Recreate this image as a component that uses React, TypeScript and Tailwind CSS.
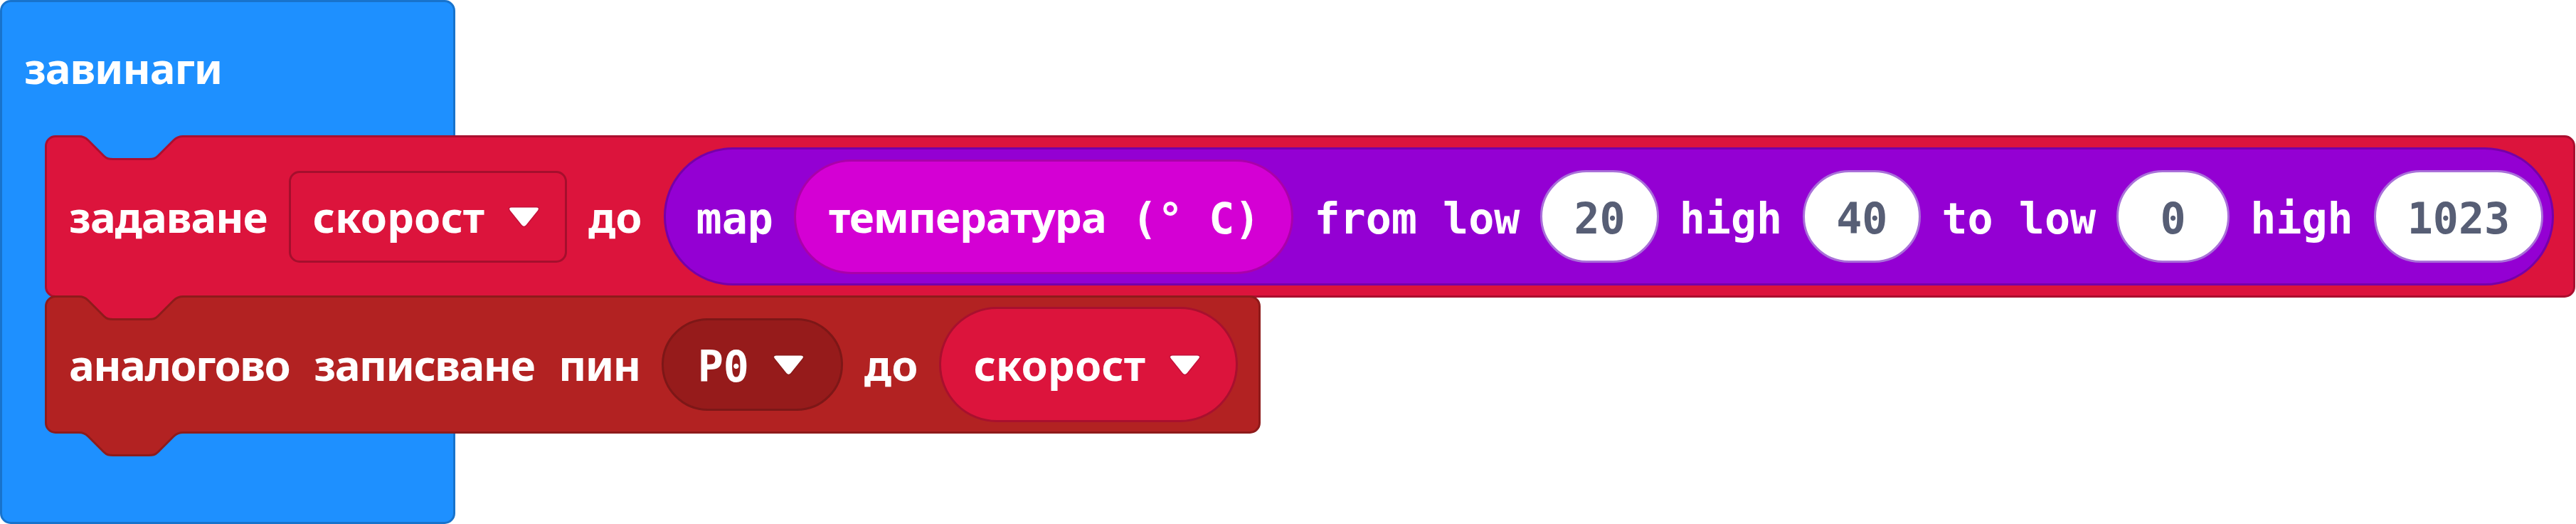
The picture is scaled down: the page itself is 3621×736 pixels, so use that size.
import React from "react";

const SANS = "font-['Noto_Sans','Open_Sans',sans-serif] font-bold";
const MONO = "font-['DejaVu_Sans_Mono',monospace] font-bold";

// notch path shared by top cut-outs and bottom tabs (origin = outer block corner)
const NOTCH =
  "M40 1.5H48C54 1.5 57 3 61 7L83 29C87 33 90 33.5 96 33.5H146C152 33.5 155 33 159 29L181 7C185 3 188 1.5 194 1.5H202";

function Notch({ fill, stroke, className }: { fill: string; stroke: string; className: string }) {
  return (
    <svg
      width="210"
      height="40"
      viewBox="0 0 210 40"
      className={`pointer-events-none absolute overflow-visible ${className}`}
    >
      <path d={NOTCH + "V0H40Z"} fill={fill} />
      <path d={NOTCH} fill="none" stroke={stroke} strokeWidth="3" />
    </svg>
  );
}

function Arrow({ ring }: { ring: string }) {
  return (
    <svg width="47" height="34" viewBox="0 0 47 34" className="shrink-0">
      <path
        d="M6 4.5H41Q45.5 4.5 43 8.5L26.5 29Q23.5 32.5 20.5 29L4 8.5Q1.5 4.5 6 4.5Z"
        fill="#fff"
        stroke={ring}
        strokeWidth="3"
        strokeLinejoin="round"
        paintOrder="stroke"
      />
    </svg>
  );
}

function Label({ children, track = "" }: { children: React.ReactNode; track?: string }) {
  return (
    <span
      className={`${SANS} whitespace-pre text-[60px] leading-none text-white [word-spacing:20px] ${track}`}
    >
      {children}
    </span>
  );
}

function Mono({ children, dark }: { children: React.ReactNode; dark?: boolean }) {
  return (
    <span
      className={`${MONO} whitespace-pre pt-[5px] text-[60px] leading-none ${
        dark ? "text-[#575e75]" : "text-white"
      }`}
    >
      {children}
    </span>
  );
}

function Num({ value }: { value: string }) {
  return (
    <div className="flex h-[130px] min-w-[159px] items-center justify-center rounded-full border-[3px] border-[#a970d9] bg-white px-[44px]">
      <Mono dark>{value}</Mono>
    </div>
  );
}

function MapBlock() {
  return (
    <div className="flex h-[194px] items-center gap-[29px] rounded-full border-[3px] border-[#7600a8] bg-[#9400d3] pl-[43px] pr-[12px]">
      <Mono>map</Mono>
      <div className="flex h-[161px] items-center rounded-full border-[3px] border-[#aa00aa] bg-[#d400d4] pl-[46px] pr-[44px]">
        <Label track="tracking-[-1px]">температура</Label>
        <Mono> (° C)</Mono>
      </div>
      <Mono>from low</Mono>
      <Num value="20" />
      <Mono>high</Mono>
      <Num value="40" />
      <Mono>to low</Mono>
      <Num value="0" />
      <Mono>high</Mono>
      <Num value="1023" />
    </div>
  );
}

export default function App() {
  return (
    <div className="h-[736px] w-[3621px] overflow-hidden bg-white">
      {/* forever */}
      <div className="w-[640px] rounded-[15px] border-[3px] border-[#1873cc] bg-[#1e90ff]">
        <div className="h-[187px] pl-[31px] pt-[62px]">
          <Label track="tracking-[-1.1px]">завинаги</Label>
        </div>

        <div className="ml-[60px] flex w-max flex-col">
          {/* set speed to map(...) */}
          <div className="relative flex w-max items-center gap-[30px] rounded-[15px] border-[3px] border-[#ab0f2f] bg-[#dc143c] py-[14px] pl-[31px] pr-[27px]">
            <Notch fill="#1e90ff" stroke="#ab0f2f" className="-left-[3px] -top-[3px]" />
            <Label track="tracking-[-1px]">задаване</Label>
            <div className="flex h-[129px] items-center gap-[32px] rounded-[15px] border-[3px] border-[#a50f2d] pl-[31px] pr-[34px]">
              <Label>скорост</Label>
              <Arrow ring="#c4103a" />
            </div>
            <Label>до</Label>
            <MapBlock />
          </div>

          {/* analog write pin */}
          <div className="relative -mt-[3px] flex w-max items-center gap-[30px] rounded-[15px] border-[3px] border-[#8e1b1b] bg-[#b22222] py-[13px] pl-[31px] pr-[29px]">
            <Notch fill="#dc143c" stroke="#8e1b1b" className="-left-[3px] -top-[3px]" />
            <Notch fill="#b22222" stroke="#8e1b1b" className="-left-[3px] top-full" />
            <Label track="tracking-[-1.5px]">аналогово записване пин</Label>
            <div className="flex h-[130px] items-center gap-[32px] rounded-full border-[3px] border-[#7d1717] bg-[#961b1b] pl-[48px] pr-[50px]">
              <Mono>P0</Mono>
              <Arrow ring="#8a1a1a" />
            </div>
            <Label>до</Label>
            <div className="flex h-[162px] items-center gap-[32px] rounded-full border-[3px] border-[#a8102e] bg-[#dc143c] pl-[45px] pr-[48px]">
              <Label>скорост</Label>
              <Arrow ring="#c4103a" />
            </div>
          </div>
        </div>

        <div className="h-[124px]" />
      </div>
    </div>
  );
}
